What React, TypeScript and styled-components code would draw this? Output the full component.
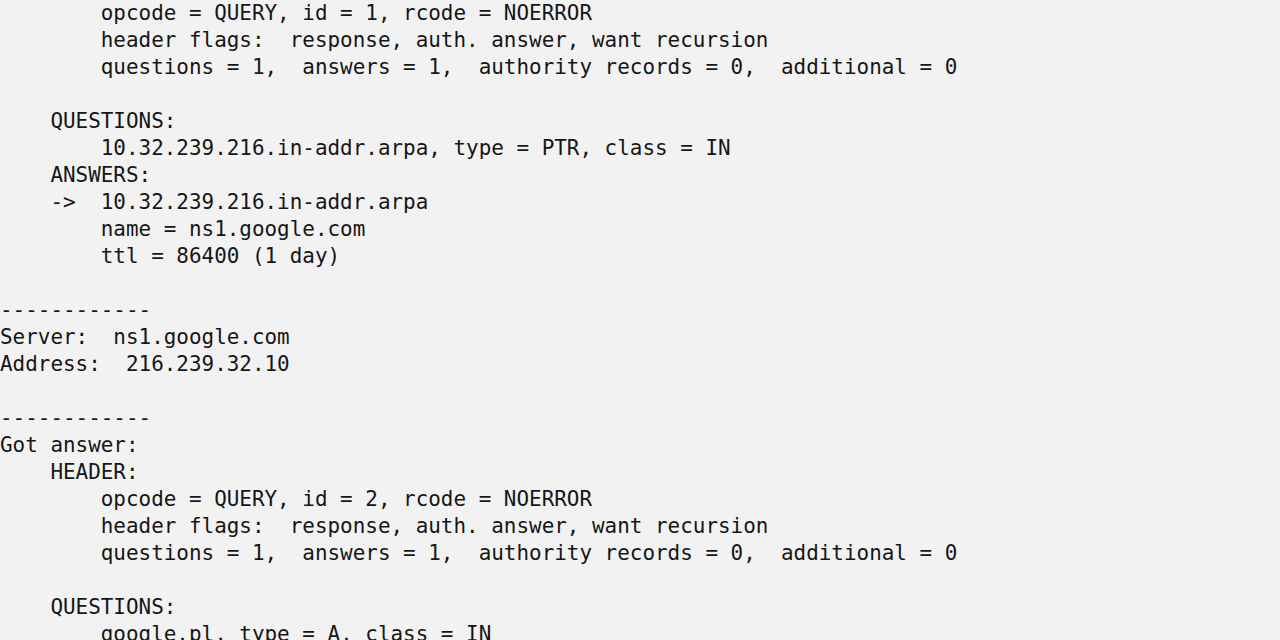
import React from "react";
import styled, { createGlobalStyle } from "styled-components";

const GlobalStyle = createGlobalStyle`
  html, body {
    margin: 0;
    padding: 0;
    background: #f2f2f2;
  }
  #root {
    min-height: 640px;
  }
`;

const Console = styled.div`
  box-sizing: border-box;
  width: 1280px;
  height: 640px;
  overflow: hidden;
  background: #f2f2f2;
  color: #161616;
  font-family: "DejaVu Sans Mono", "Liberation Mono", monospace;
  font-size: 20.93px;
  line-height: 27px;
  padding: 0;
`;

const Line = styled.div`
  white-space: pre;
  height: 27px;
`;

const lines: string[] = [
  "        opcode = QUERY, id = 1, rcode = NOERROR",
  "        header flags:  response, auth. answer, want recursion",
  "        questions = 1,  answers = 1,  authority records = 0,  additional = 0",
  "",
  "    QUESTIONS:",
  "        10.32.239.216.in-addr.arpa, type = PTR, class = IN",
  "    ANSWERS:",
  "    ->  10.32.239.216.in-addr.arpa",
  "        name = ns1.google.com",
  "        ttl = 86400 (1 day)",
  "",
  "------------",
  "Server:  ns1.google.com",
  "Address:  216.239.32.10",
  "",
  "------------",
  "Got answer:",
  "    HEADER:",
  "        opcode = QUERY, id = 2, rcode = NOERROR",
  "        header flags:  response, auth. answer, want recursion",
  "        questions = 1,  answers = 1,  authority records = 0,  additional = 0",
  "",
  "    QUESTIONS:",
  "        google.pl, type = A, class = IN",
];

export default function App() {
  return (
    <>
      <GlobalStyle />
      <Console>
        {lines.map((l, i) => (
          <Line key={i}>{l}</Line>
        ))}
      </Console>
    </>
  );
}
